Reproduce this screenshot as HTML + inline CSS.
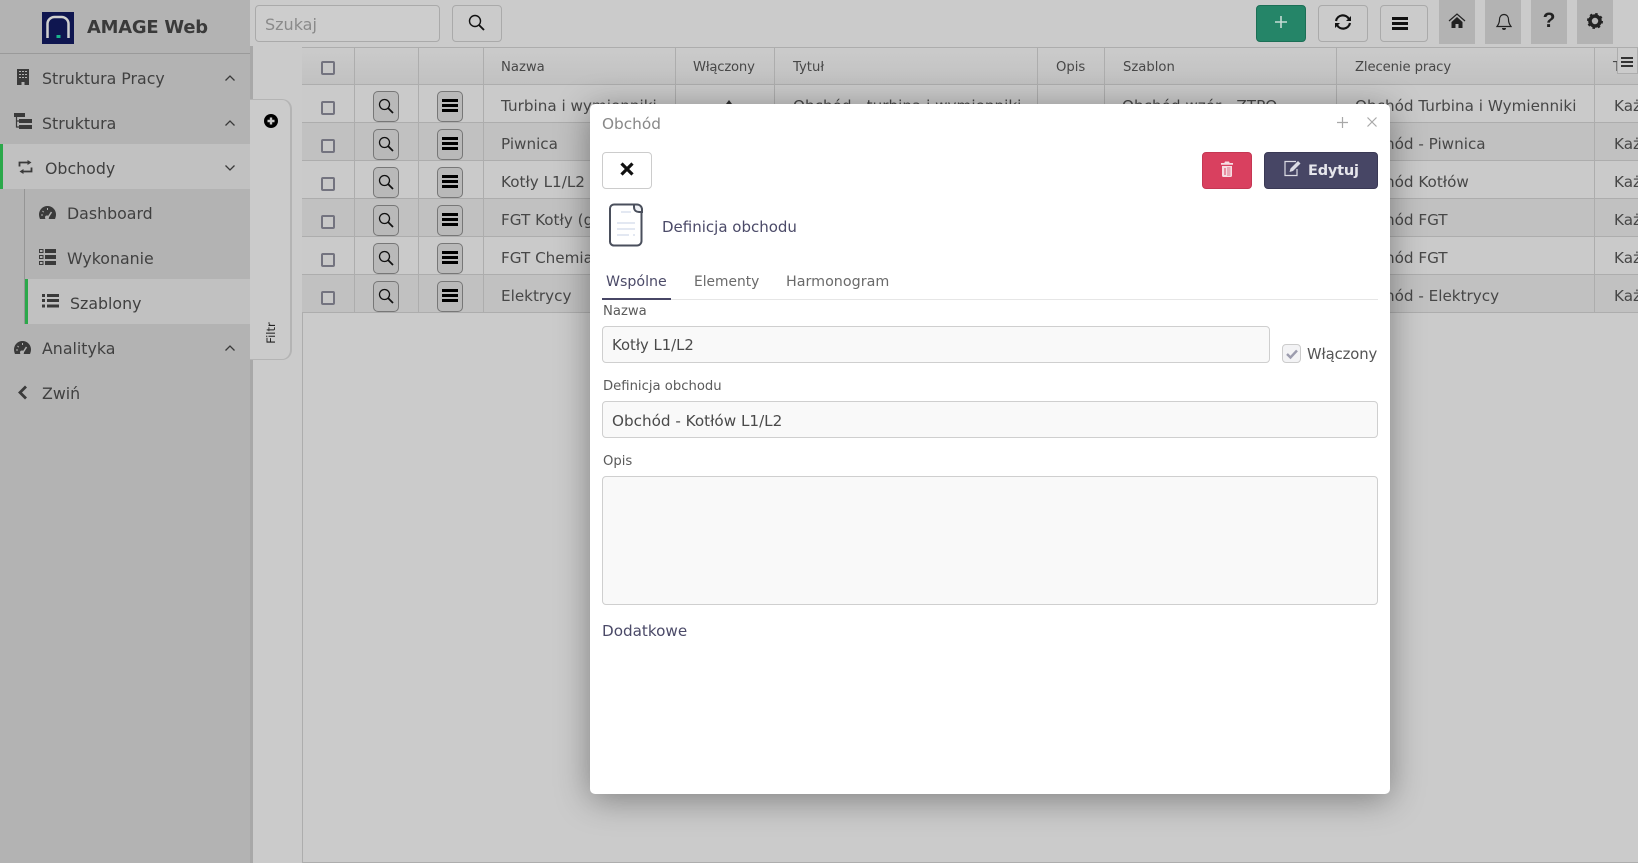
<!DOCTYPE html>
<html lang="pl"><head><meta charset="utf-8"><title>AMAGE Web</title>
<style>
*{box-sizing:border-box}
html,body{margin:0;padding:0;width:1638px;height:863px;overflow:hidden;background:#cbcbcb}
body{font-family:"DejaVu Sans","Liberation Sans",sans-serif;font-size:14.6px;color:#444;position:relative}
.t{position:absolute;white-space:nowrap;line-height:20px;height:20px;margin-top:1px}
.a{position:absolute}
svg{position:absolute;overflow:visible}
.side{left:0;top:0;width:250px;height:863px;background:#b3b3b3}
.m{color:#404040;font-size:15.8px}
.btn{position:absolute;border:1px solid #aaa;border-radius:4px;background:#cbcbcb;height:37px;top:5px}
.sq{position:absolute;top:0;width:36px;height:44px;background:#b3b3b3}
.row{position:absolute;left:302px;width:1336px;height:38px;border-bottom:1px solid #adadad}
.v{position:absolute;top:47px;height:266px;width:1px;background:#adadad}
.h{font-size:13.2px;color:#474747}
.c{color:#474747;font-size:15.2px}
.cb{position:absolute;left:321px;width:14px;height:14px;border:2px solid #73737f;border-radius:2px;background:#c8c8c8}
.rb{position:absolute;width:26px;height:31px;border:1px solid #777;border-radius:5px;background:#b9b9b9}
.modal{position:absolute;left:590px;top:104px;width:800px;height:690px;background:#fff;border-radius:5px;box-shadow:0 5px 34px rgba(0,0,0,.38)}
.lab{color:#5a5a5a;font-size:13.2px}
.inp{position:absolute;background:#f9f9f9;border:1px solid #cfcfcf;border-radius:4px}
.dk{color:#4b4a68}
</style></head><body>

<!-- top toolbar -->
<div class="a" style="left:255px;top:5px;width:185px;height:37px;border:1px solid #aaa;border-radius:4px;background:#cdcdcd"></div>
<div class="t" style="left:265px;top:14px;color:#8a8a8a;font-size:16px">Szukaj</div>
<div class="btn" style="left:452px;width:50px"></div>
<svg style="left:468px;top:14px" width="18" height="18" viewBox="0 0 18 18"><circle cx="7" cy="7" r="5.500" fill="none" stroke="#111" stroke-width="1.400"/><path d="M11 11L16 16" stroke="#111" stroke-width="1.900"/></svg>
<div class="btn" style="left:1256px;width:50px;background:#258568;border-color:#1c6f56"></div>
<svg style="left:1273px;top:14px" width="16" height="16"><path d="M8 2v12M2 8h12" stroke="#c7dcd5" stroke-width="1.600"/></svg>
<div class="btn" style="left:1318px;width:50px"></div>
<svg style="left:1334px;top:13px" width="18" height="18" viewBox="0 0 18 18"><path d="M2 8A7 7 0 0 1 15 6M16 10A7 7 0 0 1 3 12" fill="none" stroke="#111" stroke-width="2.200"/><path d="M17 3v5h-5zM1 15v-5h5z" fill="#111"/></svg>
<div class="btn" style="left:1380px;width:48px"></div>
<div class="a" style="left:1392px;top:17px;width:16px;height:3px;background:#111;box-shadow:0 5px 0 #111,0 10px 0 #111"></div>
<div class="sq" style="left:1439px"></div><div class="sq" style="left:1485px"></div><div class="sq" style="left:1531px"></div><div class="sq" style="left:1577px"></div>
<svg style="left:1448px;top:13px" width="18" height="16" viewBox="0 0 18 16"><path d="M1 8L9 1l8 7" fill="none" stroke="#222" stroke-width="1.200"/><path d="M3.500 9L9 4l5.500 5V15H10.500v-4h-3v4H3.500z" fill="#222"/></svg>
<svg style="left:1496px;top:13px" width="16" height="18" viewBox="0 0 16 18"><path d="M8 1.500c-3 0-4.500 2.500-4.500 5 0 4-1.500 5.500-2.500 7h14c-1-1.500-2.500-3-2.500-7 0-2.500-1.500-5-4.500-5z" fill="none" stroke="#222" stroke-width="1.200"/><path d="M6 15a2 2 0 0 0 4 0z" fill="#222"/></svg>
<div class="t" style="left:1540px;top:10px;width:18px;text-align:center;font:bold 21px/20px 'Liberation Sans',sans-serif;color:#222">?</div>
<svg style="left:1587px;top:13px" width="16" height="16" viewBox="0 0 16 16"><circle cx="8" cy="8" r="5" fill="none" stroke="#222" stroke-width="3.600"/><circle cx="8" cy="8" r="7" fill="none" stroke="#222" stroke-width="2" stroke-dasharray="2.500 3"/></svg>

<!-- table -->
<div class="a" style="left:302px;top:47px;width:1336px;height:816px;border-left:1px solid #adadad;border-bottom:1px solid #adadad"></div>
<div class="row" style="top:47px;border-top:1px solid #adadad;background:linear-gradient(#cbcbcb,#c1c1c1)"></div>
<div class="row" style="top:85px;background:#cacaca"></div>
<div class="row" style="top:123px;background:#c1c1c1"></div>
<div class="row" style="top:161px;background:#cacaca"></div>
<div class="row" style="top:199px;background:#c1c1c1"></div>
<div class="row" style="top:237px;background:#cacaca"></div>
<div class="row" style="top:275px;background:#c1c1c1"></div>
<div class="v" style="left:354px"></div><div class="v" style="left:418px"></div><div class="v" style="left:483px"></div><div class="v" style="left:675px"></div><div class="v" style="left:774px"></div><div class="v" style="left:1037px"></div><div class="v" style="left:1104px"></div><div class="v" style="left:1336px"></div><div class="v" style="left:1594px"></div>

<div class="t h" style="left:501px;top:57px">Nazwa</div>
<div class="t h" style="left:693px;top:57px;letter-spacing:-.2px">Włączony</div>
<div class="t h" style="left:793px;top:57px">Tytuł</div>
<div class="t h" style="left:1056px;top:57px">Opis</div>
<div class="t h" style="left:1123px;top:57px">Szablon</div>
<div class="t h" style="left:1355px;top:57px;letter-spacing:-.1px">Zlecenie pracy</div>
<div class="t h" style="left:1613px;top:57px">Typ</div>
<div class="a" style="left:1617px;top:47px;width:21px;height:27px;background:#cbcbcb;border:1px solid #adadad"></div>
<div class="a" style="left:1621px;top:57px;width:12px;height:2px;background:#333;box-shadow:0 4px 0 #333,0 8px 0 #333"></div>

<div class="cb" style="top:61px"></div><div class="cb" style="top:101px"></div><div class="cb" style="top:139px"></div><div class="cb" style="top:177px"></div><div class="cb" style="top:215px"></div><div class="cb" style="top:253px"></div><div class="cb" style="top:291px"></div>

<div class="rb" style="left:373px;top:91px"></div><div class="rb" style="left:437px;top:91px"></div>
<div class="rb" style="left:373px;top:129px"></div><div class="rb" style="left:437px;top:129px"></div>
<div class="rb" style="left:373px;top:167px"></div><div class="rb" style="left:437px;top:167px"></div>
<div class="rb" style="left:373px;top:205px"></div><div class="rb" style="left:437px;top:205px"></div>
<div class="rb" style="left:373px;top:243px"></div><div class="rb" style="left:437px;top:243px"></div>
<div class="rb" style="left:373px;top:281px"></div><div class="rb" style="left:437px;top:281px"></div>
<svg style="left:378px;top:98px" width="16" height="16" viewBox="0 0 16 16"><g fill="none" stroke="#111"><circle cx="6.500" cy="6.500" r="5" stroke-width="1.300"/><path d="M10 10l5 5" stroke-width="1.800"/></g></svg>
<svg style="left:378px;top:136px" width="16" height="16" viewBox="0 0 16 16"><g fill="none" stroke="#111"><circle cx="6.500" cy="6.500" r="5" stroke-width="1.300"/><path d="M10 10l5 5" stroke-width="1.800"/></g></svg>
<svg style="left:378px;top:174px" width="16" height="16" viewBox="0 0 16 16"><g fill="none" stroke="#111"><circle cx="6.500" cy="6.500" r="5" stroke-width="1.300"/><path d="M10 10l5 5" stroke-width="1.800"/></g></svg>
<svg style="left:378px;top:212px" width="16" height="16" viewBox="0 0 16 16"><g fill="none" stroke="#111"><circle cx="6.500" cy="6.500" r="5" stroke-width="1.300"/><path d="M10 10l5 5" stroke-width="1.800"/></g></svg>
<svg style="left:378px;top:250px" width="16" height="16" viewBox="0 0 16 16"><g fill="none" stroke="#111"><circle cx="6.500" cy="6.500" r="5" stroke-width="1.300"/><path d="M10 10l5 5" stroke-width="1.800"/></g></svg>
<svg style="left:378px;top:288px" width="16" height="16" viewBox="0 0 16 16"><g fill="none" stroke="#111"><circle cx="6.500" cy="6.500" r="5" stroke-width="1.300"/><path d="M10 10l5 5" stroke-width="1.800"/></g></svg>
<div class="a" style="left:442px;top:99px;width:16px;height:3px;background:#000;box-shadow:0 5px 0 #000,0 10px 0 #000"></div>
<div class="a" style="left:442px;top:137px;width:16px;height:3px;background:#000;box-shadow:0 5px 0 #000,0 10px 0 #000"></div>
<div class="a" style="left:442px;top:175px;width:16px;height:3px;background:#000;box-shadow:0 5px 0 #000,0 10px 0 #000"></div>
<div class="a" style="left:442px;top:213px;width:16px;height:3px;background:#000;box-shadow:0 5px 0 #000,0 10px 0 #000"></div>
<div class="a" style="left:442px;top:251px;width:16px;height:3px;background:#000;box-shadow:0 5px 0 #000,0 10px 0 #000"></div>
<div class="a" style="left:442px;top:289px;width:16px;height:3px;background:#000;box-shadow:0 5px 0 #000,0 10px 0 #000"></div>

<div class="t c" style="left:501px;top:95px">Turbina i wymienniki</div>
<div class="t c" style="left:501px;top:133px">Piwnica</div>
<div class="t c" style="left:501px;top:171px">Kotły L1/L2</div>
<div class="t c" style="left:501px;top:209px">FGT Kotły (gaz)</div>
<div class="t c" style="left:501px;top:247px">FGT Chemia</div>
<div class="t c" style="left:501px;top:285px">Elektrycy</div>
<svg style="left:726px;top:100px" width="6" height="4"><path d="M3 0l3 4H0z" fill="#333"/></svg>
<div class="t c" style="left:793px;top:95px">Obchód - turbina i wymienniki</div>
<div class="t c" style="left:1122px;top:95px">Obchód wzór - ZTPO</div>
<div class="t c" style="left:1355px;top:95px">Obchód Turbina i Wymienniki</div>
<div class="t c" style="left:1355px;top:133px">Obchód - Piwnica</div>
<div class="t c" style="left:1355px;top:171px">Obchód Kotłów</div>
<div class="t c" style="left:1355px;top:209px">Obchód FGT</div>
<div class="t c" style="left:1355px;top:247px">Obchód FGT</div>
<div class="t c" style="left:1355px;top:285px">Obchód - Elektrycy</div>
<div class="t c" style="left:1614px;top:95px">Każdy</div><div class="t c" style="left:1614px;top:133px">Każdy</div><div class="t c" style="left:1614px;top:171px">Każdy</div><div class="t c" style="left:1614px;top:209px">Każdy</div><div class="t c" style="left:1614px;top:247px">Każdy</div><div class="t c" style="left:1614px;top:285px">Każdy</div>

<!-- sidebar -->
<div class="a side"></div>
<div class="a" style="left:250px;top:46px;width:3px;height:817px;background:#a8a8a8"></div>
<div class="a" style="left:0;top:53px;width:250px;height:1px;background:#9a9a9a"></div>
<svg style="left:42px;top:12px" width="32" height="32" viewBox="0 0 32 32"><rect width="32" height="32" fill="#0f1650"/><path d="M5.500 26V12a7 7 0 0 1 7-7h7a7 7 0 0 1 7 7v14" fill="none" stroke="#d0d0d0" stroke-width="2.500"/><rect x="14.500" y="23" width="4" height="3" fill="#18b48c"/></svg>
<div class="t" style="left:87px;top:17px;font-weight:bold;font-size:17.900px;color:#3a3a3a;letter-spacing:-.2px">AMAGE Web</div>

<div class="a" style="left:0;top:144px;width:250px;height:45px;background:#c1c1c1;border-left:3px solid #2ba84a"></div>
<div class="a" style="left:24px;top:189px;width:1px;height:135px;background:#959595"></div>
<div class="a" style="left:25px;top:279px;width:225px;height:45px;background:#c1c1c1;border-left:3px solid #2ba84a"></div>

<svg style="left:17px;top:69px" width="12" height="16" viewBox="0 0 12 16"><path d="M0 0h12v16H7.500v-3h-3v3H0z" fill="#3a3a3a"/><path d="M2 2.500h8M2 5.500h8M2 8.500h8" stroke="#b3b3b3" stroke-width="1" stroke-dasharray="2 1"/></svg>
<div class="t m" style="left:42px;top:68px">Struktura Pracy</div>
<svg style="left:225px;top:75px" width="10" height="6"><path d="M.5 5.500L5 1l4.500 4.500" fill="none" stroke="#3a3a3a" stroke-width="1.300"/></svg>

<svg style="left:14px;top:113px" width="18" height="17" viewBox="0 0 18 17"><path d="M0 0h11v4H0zM5 6h13v4H5zM5 12h13v4H5z" fill="#3a3a3a"/><path d="M2.500 4v10H5M2.500 8H5" fill="none" stroke="#3a3a3a" stroke-width="1.200"/></svg>
<div class="t m" style="left:42px;top:113px">Struktura</div>
<svg style="left:225px;top:120px" width="10" height="6"><path d="M.5 5.500L5 1l4.500 4.500" fill="none" stroke="#3a3a3a" stroke-width="1.300"/></svg>

<svg style="left:18px;top:160px" width="15" height="14" viewBox="0 0 15 14"><path d="M11 2.500H1.500v4M3 11.500h10.500v-4" fill="none" stroke="#3a3a3a" stroke-width="1.800"/><path d="M9.500 0l4 2.500-4 2.500zM5.500 9l-4 2.500 4 2.500z" fill="#3a3a3a"/></svg>
<div class="t m" style="left:45px;top:158px">Obchody</div>
<svg style="left:225px;top:165px" width="10" height="6"><path d="M.5.500L5 5 9.500.5" fill="none" stroke="#3a3a3a" stroke-width="1.300"/></svg>

<svg style="left:39px;top:206px" width="17" height="14" viewBox="0 0 17 14"><path d="M8.500 0A8.500 8.500 0 0 0 0 8.500C0 10 .4 11.500 1 13h15c.6-1.500 1-3 1-4.500A8.500 8.500 0 0 0 8.500 0z" fill="#3a3a3a"/><path d="M8 13l4.500-7" stroke="#b3b3b3" stroke-width="1.500"/><circle cx="8" cy="11.500" r="2" fill="#b3b3b3"/><path d="M8.500 2v2M3.500 5l1.200 1.200M2 9h2" stroke="#b3b3b3" stroke-width="1"/></svg>
<div class="t m" style="left:67px;top:203px">Dashboard</div>

<svg style="left:39px;top:249px" width="17" height="16" viewBox="0 0 17 16"><path d="M6 0h11v4H6zM6 6h11v4H6zM6 12h11v4H6z" fill="#3a3a3a"/><path d="M.5.500h3.500v3H.5zM.5 6.500h3.500v3H.5zM.5 12.500h3.500v3H.5z" fill="none" stroke="#3a3a3a"/></svg>
<div class="t m" style="left:67px;top:248px">Wykonanie</div>

<svg style="left:42px;top:294px" width="17" height="14" viewBox="0 0 17 14"><path d="M0 0h3v3H0zM0 5h3v3H0zM0 10.500h3v3H0zM5 0h12v3H5zM5 5h12v3H5zM5 10.500h12v3H5z" fill="#3a3a3a"/></svg>
<div class="t m" style="left:70px;top:293px">Szablony</div>

<svg style="left:14px;top:341px" width="17" height="14" viewBox="0 0 17 14"><path d="M8.500 0A8.500 8.500 0 0 0 0 8.500C0 10 .4 11.500 1 13h15c.6-1.500 1-3 1-4.500A8.500 8.500 0 0 0 8.500 0z" fill="#3a3a3a"/><path d="M8 13l4.500-7" stroke="#b3b3b3" stroke-width="1.500"/><circle cx="8" cy="11.500" r="2" fill="#b3b3b3"/><path d="M8.500 2v2M3.500 5l1.200 1.200M2 9h2" stroke="#b3b3b3" stroke-width="1"/></svg>
<div class="t m" style="left:42px;top:338px">Analityka</div>
<svg style="left:225px;top:345px" width="10" height="6"><path d="M.5 5.500L5 1l4.500 4.500" fill="none" stroke="#3a3a3a" stroke-width="1.300"/></svg>

<svg style="left:17px;top:385px" width="11" height="15" viewBox="0 0 11 15"><path d="M9 1.500L3 7.500l6 6" fill="none" stroke="#3a3a3a" stroke-width="2.800"/></svg>
<div class="t m" style="left:42px;top:383px">Zwiń</div>

<!-- filter tab -->
<div class="a" style="left:250px;top:99px;width:42px;height:261px;background:#cbcbcb;border:1px solid #b4b4b4;border-left:0;border-right:2px solid #b4b4b4;border-radius:0 10px 10px 0"></div>
<svg style="left:264px;top:114px" width="14" height="14" viewBox="0 0 14 14"><circle cx="7" cy="7" r="7" fill="#000"/><path d="M7 3.500v7M3.500 7h7" stroke="#cbcbcb" stroke-width="2.400"/></svg>
<div class="t" style="left:251px;top:323px;width:40px;margin-top:0;text-align:center;font-size:11.500px;color:#222;transform:rotate(-90deg)">Filtr</div>

<!-- modal -->
<div class="modal"></div>
<div class="t" style="left:602px;top:113px;font-size:15.300px;color:#888">Obchód</div>
<svg style="left:1337px;top:117px" width="11" height="11"><path d="M5.500 0v11M0 5.500h11" stroke="#a8a8a8" stroke-width="1.200"/></svg>
<svg style="left:1367px;top:117px" width="10" height="10"><path d="M.5.500l9 9M9.500.5l-9 9" stroke="#a8a8a8" stroke-width="1.200"/></svg>

<div class="a" style="left:602px;top:152px;width:50px;height:37px;background:#fff;border:1px solid #ccc;border-radius:4px"></div>
<svg style="left:620px;top:162px" width="14" height="14"><path d="M1.500 1.500l11 11M12.500 1.500l-11 11" stroke="#111" stroke-width="3.200"/></svg>
<div class="a" style="left:1202px;top:152px;width:50px;height:37px;background:#d9405f;border:1px solid #c53753;border-radius:4px"></div>
<svg style="left:1221px;top:161px" width="12" height="16" viewBox="0 0 12 16"><path d="M4 .5h4l.7 1.500H12v1.700H0V2h3.300z" fill="#f6dde2"/><path d="M1 5h10v9.500a1.500 1.500 0 0 1-1.500 1.500h-7A1.500 1.500 0 0 1 1 14.500z" fill="#f6dde2"/><path d="M4 7v7" stroke="#d9405f" stroke-width="1"/><path d="M6 6h3.500v9H6z" fill="#e8a9b6"/></svg>
<div class="a" style="left:1264px;top:152px;width:114px;height:37px;background:#474665;border:1px solid #3a3955;border-radius:4px"></div>
<svg style="left:1284px;top:160px" width="18" height="17" viewBox="0 0 18 17"><path d="M12 1.500H1v14h12V9" fill="none" stroke="#dcdce4" stroke-width="1.200"/><path d="M5.500 12l1-3.500L14 1l2.500 2.500L9 11z" fill="#dcdce4"/></svg>
<div class="t" style="left:1308px;top:160px;font-weight:bold;font-size:14.500px;color:#e6e6ec;letter-spacing:-.2px">Edytuj</div>

<svg style="left:609px;top:203px" width="34" height="44" viewBox="0 0 34 44"><path d="M5 1.500h22c0 4 1 5.500 5.500 5.500V38a4.500 4.500 0 0 1-4.500 4.500H5A4 4 0 0 1 1 38V5.500A4 4 0 0 1 5 1.500z" fill="#fff" stroke="#4a4f5c" stroke-width="2"/><path d="M25 1.500h3a5 5 0 0 1 5 5v2.500h-3c-3 0-5-2-5-5z" fill="#f0f2f6" stroke="#4a4f5c" stroke-width="2"/><path d="M12 9h10M8 20h18M8 26h18M8 32h12M24 32h2" stroke="#e3e8f2" stroke-width="2"/></svg>
<div class="t dk" style="left:662px;top:216px;font-size:15px">Definicja obchodu</div>

<div class="t dk" style="left:606px;top:271px;font-size:14.200px">Wspólne</div>
<div class="t" style="left:694px;top:271px;font-size:13.800px;color:#6a6a6a">Elementy</div>
<div class="t" style="left:786px;top:271px;font-size:14.300px;color:#6a6a6a">Harmonogram</div>
<div class="a" style="left:602px;top:299px;width:776px;height:1px;background:#e6e6e6"></div>
<div class="a" style="left:602px;top:298px;width:69px;height:2px;background:#474665"></div>

<div class="t lab" style="left:603px;top:301px">Nazwa</div>
<div class="inp" style="left:602px;top:326px;width:668px;height:37px"></div>
<div class="t" style="left:612px;top:335px;font-size:14.800px;color:#4a4a4a">Kotły L1/L2</div>
<div class="a" style="left:1282px;top:344px;width:19px;height:19px;background:#f3f3f5;border:1px solid #ccc;border-radius:4px"></div>
<svg style="left:1286px;top:349px" width="12" height="10"><path d="M1 5l3.500 3.500L11 1.500" fill="none" stroke="#9c9cae" stroke-width="2.400"/></svg>
<div class="t" style="left:1307px;top:344px;font-size:14.800px;color:#555;letter-spacing:-.1px">Włączony</div>

<div class="t lab" style="left:603px;top:376px">Definicja obchodu</div>
<div class="inp" style="left:602px;top:401px;width:776px;height:37px"></div>
<div class="t" style="left:612px;top:410px;font-size:15.200px;color:#4a4a4a">Obchód - Kotłów L1/L2</div>

<div class="t lab" style="left:603px;top:451px">Opis</div>
<div class="inp" style="left:602px;top:476px;width:776px;height:129px"></div>
<div class="t dk" style="left:602px;top:620px;font-size:15.200px">Dodatkowe</div>

</body></html>
